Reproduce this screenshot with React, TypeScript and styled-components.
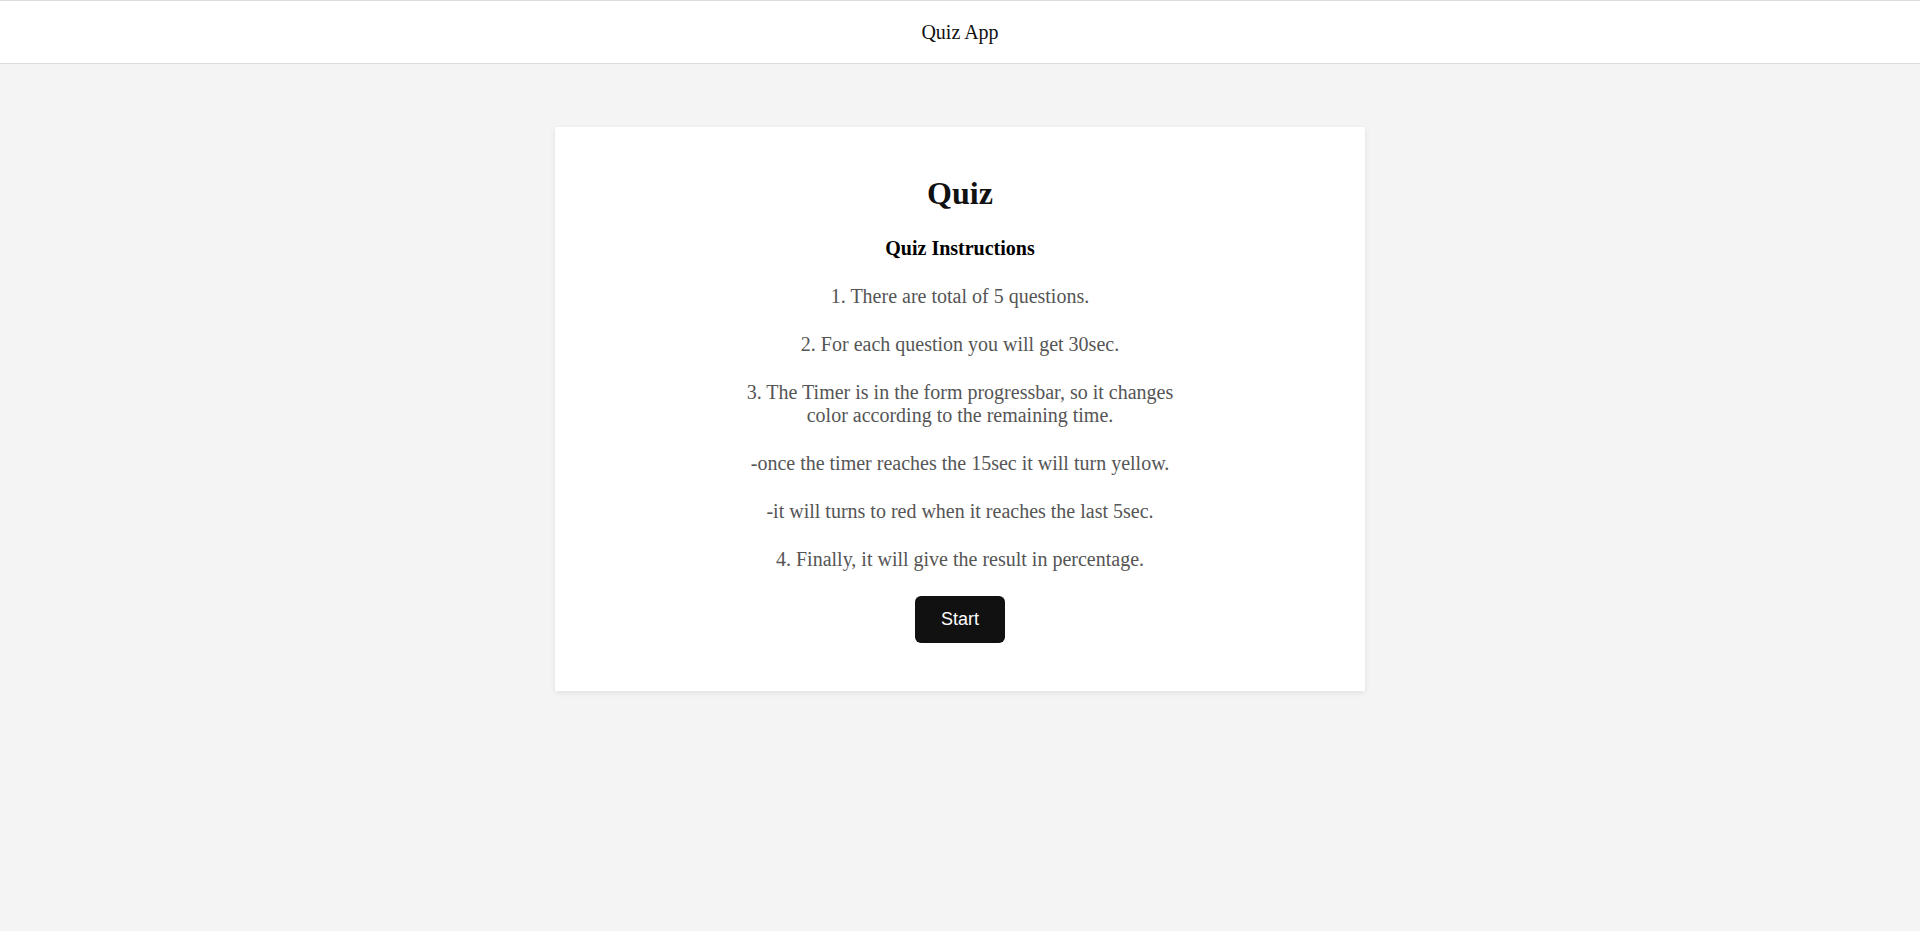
import styled, { createGlobalStyle } from "styled-components";

const GlobalStyle = createGlobalStyle`
  * {
    box-sizing: border-box;
  }
  body {
    margin: 0;
    background: #f4f4f4;
    font-family: "Liberation Serif", "Times New Roman", serif;
  }
`;

const instructions = [
  "1. There are total of 5 questions.",
  "2. For each question you will get 30sec.",
  "3. The Timer is in the form progressbar, so it changes color according to the remaining time.",
  "-once the timer reaches the 15sec it will turn yellow.",
  "-it will turns to red when it reaches the last 5sec.",
  "4. Finally, it will give the result in percentage.",
];

export default function App() {
  return (
    <>
      <GlobalStyle />
      <StyledPage>
        <Header>
          <HeaderTitle>Quiz App</HeaderTitle>
        </Header>
        <Main>
          <Card>
            <Title>Quiz</Title>
            <SubTitle>Quiz Instructions</SubTitle>
            {instructions.map((text) => (
              <Instruction key={text}>{text}</Instruction>
            ))}
            <StartButton>Start</StartButton>
          </Card>
        </Main>
      </StyledPage>
    </>
  );
}

const StyledPage = styled.div`
  min-height: 100vh;
  display: flex;
  flex-direction: column;
`;

const Header = styled.header`
  height: 64px;
  display: flex;
  align-items: center;
  justify-content: center;
  background: #fff;
  border-top: 1px solid #dcdcdc;
  border-bottom: 1px solid #dcdcdc;
`;

const HeaderTitle = styled.span`
  font-size: 20px;
  line-height: 23px;
  color: #111;
`;

const Main = styled.main`
  display: flex;
  justify-content: center;
  padding-top: 63px;
`;

const Card = styled.section`
  width: 810px;
  padding: 48px;
  background: #fff;
  box-shadow: 0 2px 6px rgba(0, 0, 0, 0.08);
  display: flex;
  flex-direction: column;
  align-items: center;
  gap: 25px;
  text-align: center;
`;

const Title = styled.h1`
  margin: 0;
  font-size: 32px;
  line-height: 37px;
  font-weight: bold;
  color: #111;
`;

const SubTitle = styled.h3`
  margin: 0;
  font-size: 20px;
  line-height: 23px;
  font-weight: bold;
  color: #000;
`;

const Instruction = styled.p`
  margin: 0;
  max-width: 450px;
  font-size: 20px;
  line-height: 23px;
  color: #555;
`;

const StartButton = styled.button`
  width: 90px;
  height: 47px;
  border: none;
  border-radius: 6px;
  background: #111;
  color: #fff;
  font-family: "Liberation Sans", Arial, sans-serif;
  font-size: 18px;
  cursor: pointer;
`;
